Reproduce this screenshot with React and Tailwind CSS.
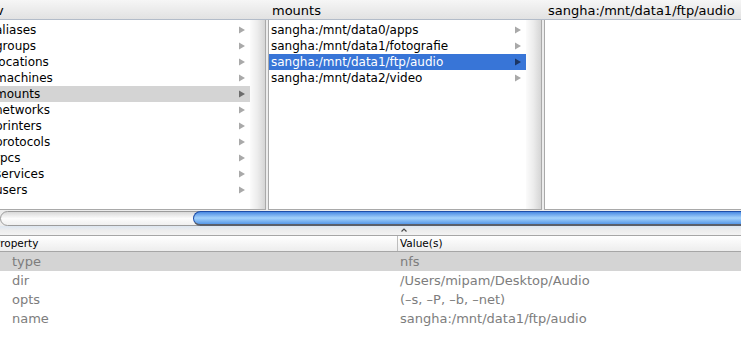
import React from 'react';

const dirs = ['aliases', 'groups', 'locations', 'machines', 'mounts', 'networks', 'printers', 'protocols', 'rpcs', 'services', 'users'];
const mounts = ['sangha:/mnt/data0/apps', 'sangha:/mnt/data1/fotografie', 'sangha:/mnt/data1/ftp/audio', 'sangha:/mnt/data2/video'];
const props = [
  ['type', 'nfs'],
  ['dir', '/Users/mipam/Desktop/Audio'],
  ['opts', '(–s, –P, –b, –net)'],
  ['name', 'sangha:/mnt/data1/ftp/audio'],
];

function Arrow({ color }) {
  return (
    <svg width="6" height="8" viewBox="0 0 6 8" className="shrink-0">
      <polygon points="0,0.5 6,4 0,7.5" fill={color} />
    </svg>
  );
}

function Row({ text, mode }) {
  // mode: 'none' | 'gray' (selected, inactive) | 'blue' (selected, active)
  const cls = mode === 'blue' ? 'bg-[#3875d7] text-white' : mode === 'gray' ? 'bg-[#d4d4d4] text-black' : 'text-black';
  const arrow = mode === 'blue' ? '#1b3563' : mode === 'gray' ? '#6c6c6c' : '#a9a9a9';
  return (
    <div className={`h-[16px] flex items-center pl-[2px] pr-[5px] ${cls}`}>
      <span className="flex-1 whitespace-nowrap overflow-hidden leading-[16px]">{text}</span>
      <Arrow color={arrow} />
    </div>
  );
}

function Column({ items, selected, mode }) {
  return (
    <div className="w-[274px] shrink-0 h-full flex border-x border-b border-[#a9a9a9] bg-white">
      <div className="w-[257px] pt-[2px] text-[12px]">
        {items.map((t, i) => (
          <Row key={t} text={t} mode={i === selected ? mode : 'none'} />
        ))}
      </div>
      <div className="w-[15px] bg-linear-to-r from-[#fbfbfb] via-[#ececec] to-[#d5d5d5]" />
    </div>
  );
}

export default function App() {
  return (
    <div className="w-[741px] h-[342px] overflow-hidden bg-white font-['DejaVu_Sans',sans-serif] text-black">
      {/* column titles */}
      <div className="h-[20px] border-b border-[#b3bcc9] bg-linear-to-b from-[#f6f6f6] to-[#e2e2e2] overflow-hidden">
        <div className="flex -ml-[8px] text-[13px] leading-[19px] pt-[1px]">
          <div className="w-[276px] shrink-0 pl-[4px]">v</div>
          <div className="w-[276px] shrink-0 pl-[4px]">mounts</div>
          <div className="w-[276px] shrink-0 pl-[4px] whitespace-nowrap">sangha:/mnt/data1/ftp/audio</div>
        </div>
      </div>

      {/* browser columns */}
      <div className="h-[190px] bg-[#ececec] overflow-hidden">
        <div className="flex gap-[2px] -ml-[8px] h-full">
          <Column items={dirs} selected={4} mode="gray" />
          <Column items={mounts} selected={2} mode="blue" />
          <div className="w-[274px] shrink-0 h-full border-x border-b border-[#a9a9a9] bg-white" />
        </div>
      </div>

      <div className="h-[1px] bg-[#ececec]" />

      {/* horizontal scroller */}
      <div className="h-[15px] flex bg-[#ececec]">
        <div className="w-[200px] h-full shrink-0 rounded-l-[8px] border border-[#9c9c9c] bg-linear-to-b from-[#d9d9d9] via-[#fcfcfc] to-[#f0f0f0]" />
        <div className="-ml-[7px] flex-1 h-full rounded-l-[8px] border-t border-l border-[#1e4ea8] border-b-2 border-b-[#5a5f6a] bg-linear-to-b from-[#4a8ae2] via-[#a4d2fb] to-[#5698e8]" />
      </div>

      {/* splitter */}
      <div className="h-[9px] pl-[401px] pt-[2px] bg-linear-to-b from-[#dde6f0] via-[#ededed] to-[#f3f3f3]">
        <svg width="6" height="4" viewBox="0 0 6 4">
          <polyline points="0.5,3.5 3,1 5.5,3.5" fill="none" stroke="#4a4a4a" strokeWidth="1.2" />
        </svg>
      </div>

      {/* properties table */}
      <div className="h-[17px] border-y border-[#a6a6a6] bg-linear-to-b from-[#ffffff] to-[#ededed] overflow-hidden">
        <div className="flex -ml-[8px] text-[10.5px] leading-[15px]">
          <div className="w-[406px] shrink-0 border-r border-[#bdbdbd] pl-[2px]">Property</div>
          <div className="flex-1 pl-[2px]">Value(s)</div>
        </div>
      </div>
      <div className="text-[13px] text-[#7d7d7d]">
        {props.map(([k, v], i) => (
          <div key={k} className={`h-[19px] leading-[20px] flex ${i === 0 ? 'bg-[#d4d4d4]' : ''}`}>
            <div className="w-[398px] shrink-0 pl-[12px]">{k}</div>
            <div className="flex-1 pl-[2px] whitespace-nowrap">{v}</div>
          </div>
        ))}
      </div>
    </div>
  );
}
